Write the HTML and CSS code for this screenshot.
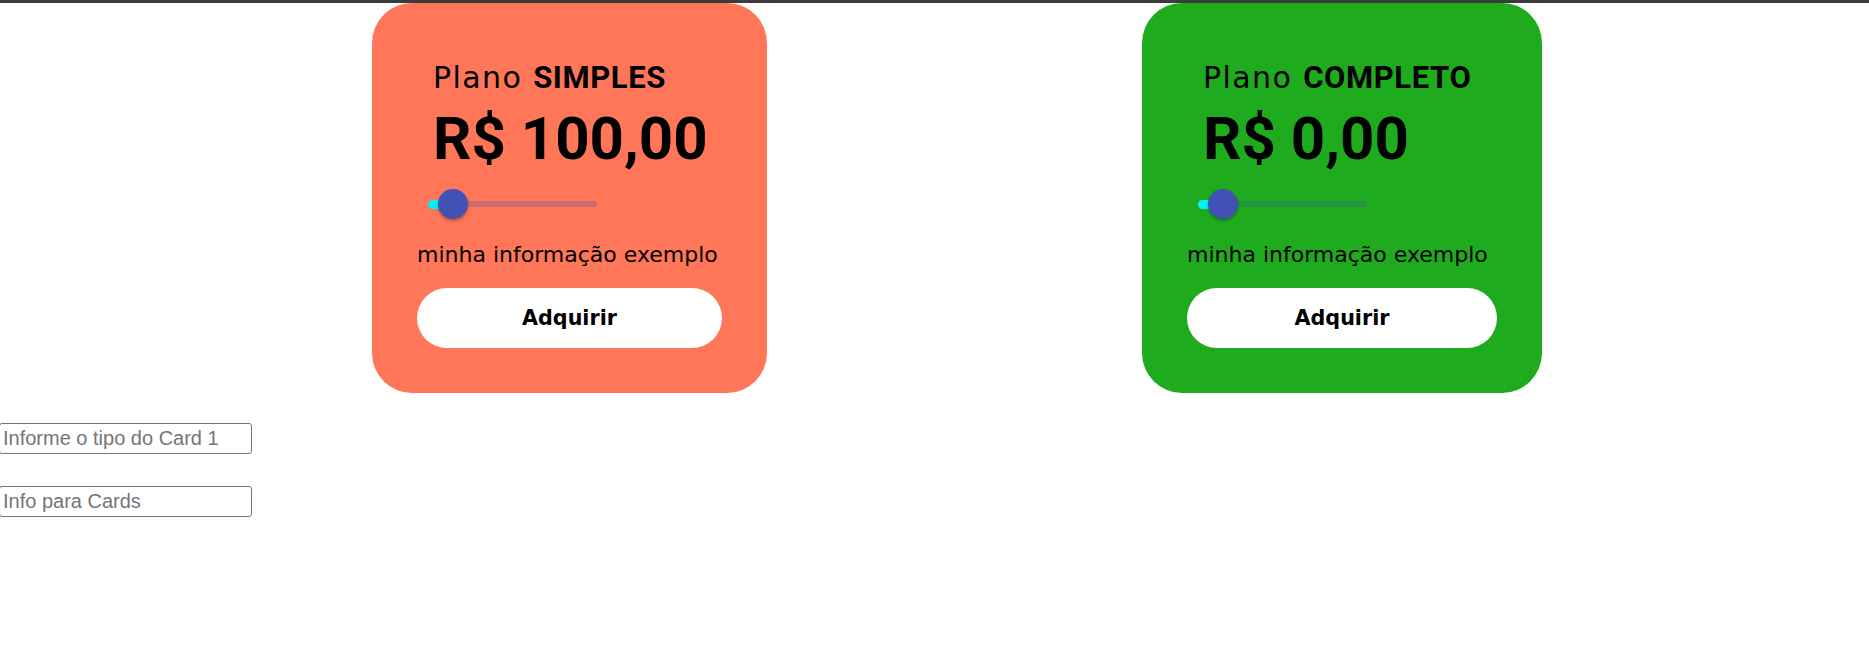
FILE: index.html
```html
<!DOCTYPE html>
<html lang="pt-BR">
<head>
<meta charset="utf-8">
<title>Planos</title>
<link rel="stylesheet" href="styles.css">
</head>
<body>
<div class="topbar"></div>
<main class="plans">
  <section class="card card-simple">
    <div class="card-head">
      <h2 class="plan-name">Plano <strong>SIMPLES</strong></h2>
      <p class="plan-price">R$ 100,00</p>
    </div>
    <div class="slider">
      <div class="slider-rail"></div>
      <div class="slider-fill" style="width:25px"></div>
      <div class="slider-thumb" style="left:10px"></div>
    </div>
    <p class="plan-info">minha informação exemplo</p>
    <button class="buy" type="button">Adquirir</button>
  </section>
  <section class="card card-complete">
    <div class="card-head">
      <h2 class="plan-name">Plano <strong>COMPLETO</strong></h2>
      <p class="plan-price">R$ 0,00</p>
    </div>
    <div class="slider">
      <div class="slider-rail"></div>
      <div class="slider-fill" style="width:25px"></div>
      <div class="slider-thumb" style="left:10px"></div>
    </div>
    <p class="plan-info">minha informação exemplo</p>
    <button class="buy" type="button">Adquirir</button>
  </section>
</main>
<form class="controls">
  <input class="field" type="text" placeholder="Informe o tipo do Card 1">
  <input class="field" type="text" placeholder="Info para Cards">
</form>
</body>
</html>
```
FILE: styles.css
```css
html, body {
  margin: 0;
  padding: 0;
  background: #ffffff;
}

body {
  font-family: "DejaVu Sans", sans-serif;
  color: #000;
}

.topbar {
  height: 3px;
  background: #3b3b3b;
}

.plans {
  display: flex;
  align-items: flex-start;
  gap: 375px;
  padding-left: 372px;
}

.card {
  box-sizing: border-box;
  padding: 45px;
  border-radius: 40px;
  display: flex;
  flex-direction: column;
}

.card-simple {
  width: 395px;
  background: #ff7658;
}

.card-complete {
  width: 400px;
  background: #1eab1e;
}

.card-head {
  padding: 0 16px;
}

.plan-name {
  margin: 10px 0 0;
  font-size: 30px;
  line-height: 40px;
  font-weight: 400;
  letter-spacing: 1.4px;
  white-space: nowrap;
}

.plan-name strong {
  font-family: Roboto, "DejaVu Sans", sans-serif;
  font-size: 31px;
  font-weight: 700;
  letter-spacing: 0.6px;
}

.plan-price {
  margin: 6px 0 0;
  font-family: Roboto, "DejaVu Sans", sans-serif;
  font-weight: 700;
  font-size: 60px;
  line-height: 70px;
  white-space: nowrap;
}

.slider {
  position: relative;
  width: 169px;
  height: 30px;
  margin: 15px 0 0 11px;
}

.slider-rail {
  position: absolute;
  left: 0;
  right: 0;
  top: 12px;
  height: 6px;
  border-radius: 3px;
  background: rgba(63, 81, 181, 0.27);
}

.slider-fill {
  position: absolute;
  left: 0;
  top: 10.5px;
  height: 9px;
  border-radius: 4.5px 0 0 4.5px;
  background: #00f5f5;
}

.slider-thumb {
  position: absolute;
  top: 0;
  width: 30px;
  height: 30px;
  border-radius: 50%;
  background: #4152b4;
  box-shadow: 0 2px 3px rgba(0, 0, 0, 0.3);
}

.plan-info {
  margin: 22.5px 0 0;
  font-size: 22px;
  line-height: 26px;
  white-space: nowrap;
}

.buy {
  margin-top: 20.5px;
  width: 100%;
  height: 60px;
  border: none;
  border-radius: 30px;
  background: #ffffff;
  color: #000;
  font-family: "DejaVu Sans", sans-serif;
  font-weight: 700;
  font-size: 20.7px;
  padding: 0;
}

.controls {
  display: flex;
  flex-direction: column;
  align-items: flex-start;
  gap: 32px;
  margin: 30px 0 0;
}

.field {
  box-sizing: border-box;
  width: 253px;
  height: 31px;
  margin: 0 0 0 -1px;
  padding: 0 2px 0 3px;
  border: 1px solid #767676;
  border-radius: 3px;
  font-family: "Liberation Sans", Arial, sans-serif;
  font-size: 20px;
  color: #000;
  background: #fff;
}

.field::placeholder {
  color: #757575;
}
```
